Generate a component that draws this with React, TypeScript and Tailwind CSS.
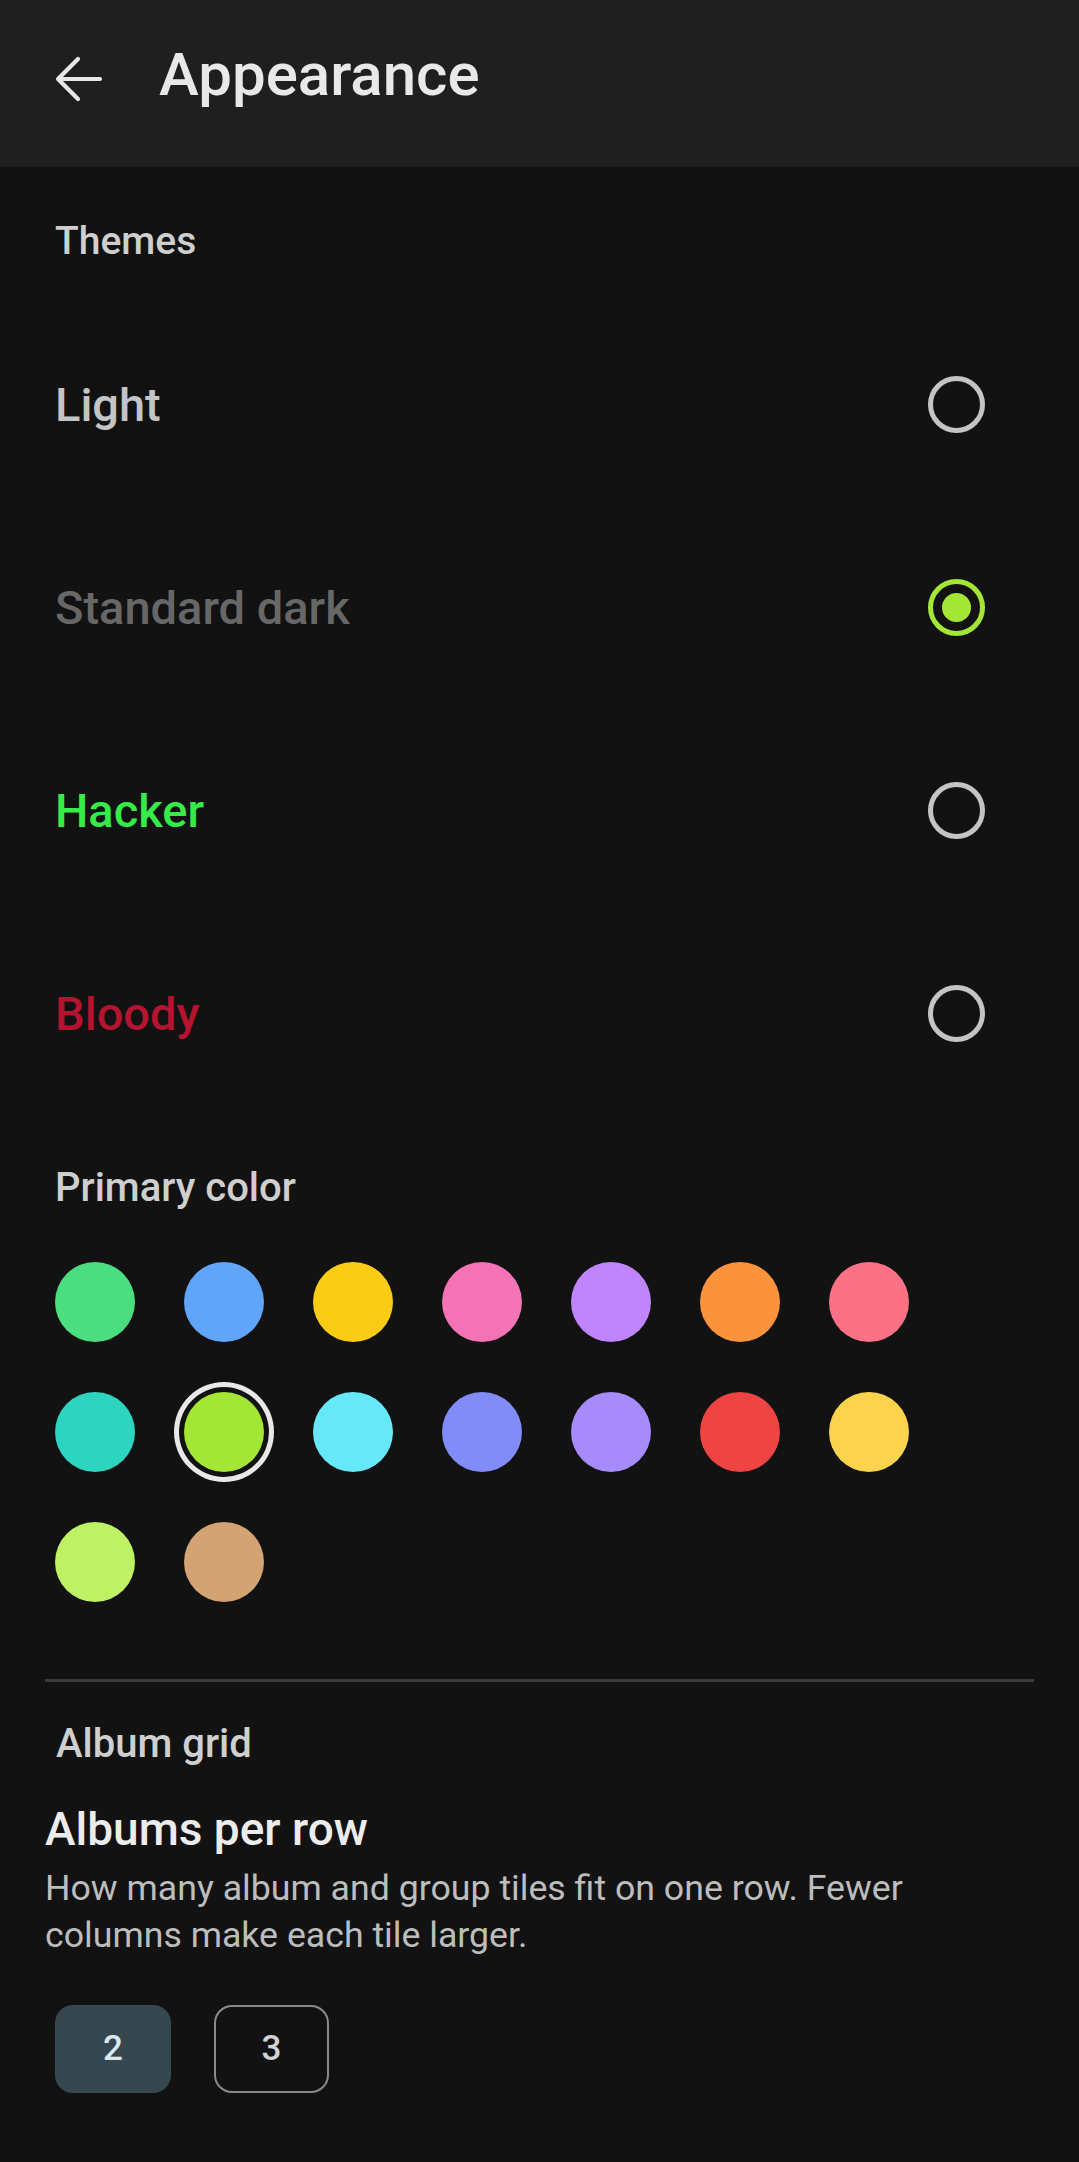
import { useState } from "react";

interface ThemeOption {
  id: string;
  label: string;
  textClass: string;
}

const themes: ThemeOption[] = [
  { id: "light", label: "Light", textClass: "text-[#c4c4c4]" },
  { id: "standard", label: "Standard dark", textClass: "text-[#676767]" },
  { id: "hacker", label: "Hacker", textClass: "text-[#36ea48]" },
  { id: "bloody", label: "Bloody", textClass: "text-[#b4142f]" },
];

const swatches = [
  { id: "green", className: "bg-[#4ade80]" },
  { id: "blue", className: "bg-[#60a5fa]" },
  { id: "yellow", className: "bg-[#facc15]" },
  { id: "pink", className: "bg-[#f472b6]" },
  { id: "purple", className: "bg-[#c084fc]" },
  { id: "orange", className: "bg-[#fb923c]" },
  { id: "rose", className: "bg-[#fb7185]" },
  { id: "teal", className: "bg-[#2dd4bf]" },
  { id: "lime", className: "bg-[#a3e635]" },
  { id: "cyan", className: "bg-[#67e8f9]" },
  { id: "indigo", className: "bg-[#818cf8]" },
  { id: "violet", className: "bg-[#a78bfa]" },
  { id: "red", className: "bg-[#ef4444]" },
  { id: "amber", className: "bg-[#fcd34d]" },
  { id: "lightlime", className: "bg-[#bef264]" },
  { id: "tan", className: "bg-[#d4a373]" },
];

const BackArrow = () => (
  <svg width="48" height="46" viewBox="0 0 48 46" fill="none" className="mt-[8px] shrink-0">
    <path
      d="M45 23H4M23 3 3 23l20 20"
      stroke="#e6e6e6"
      strokeWidth="4.2"
      strokeLinecap="round"
      strokeLinejoin="round"
    />
  </svg>
);

const Radio = ({ checked }: { checked: boolean }) =>
  checked ? (
    <span className="h-[57px] w-[57px] rounded-full border-[5px] border-[#a3e635] flex items-center justify-center">
      <span className="h-[29px] w-[29px] rounded-full bg-[#a3e635]" />
    </span>
  ) : (
    <span className="h-[57px] w-[57px] rounded-full border-[5px] border-[#c4c4c4]" />
  );

const App = () => {
  const [theme, setTheme] = useState("standard");
  const [color, setColor] = useState("lime");
  const [perRow, setPerRow] = useState(2);

  return (
    <div className="min-h-screen bg-[#121212] font-['Roboto','Liberation_Sans',sans-serif]">
      <header className="h-[167px] bg-[#1f1f1f] flex items-center gap-[56px] px-[55px] pb-[17px]">
        <BackArrow />
        <h1 className="text-[60px] leading-[70px] font-medium text-[#e8e8e8]">Appearance</h1>
      </header>

      <section className="px-[55px]">
        <h2 className="mt-[48px] text-[39px] leading-[52px] font-medium text-[#cfcfcf]">Themes</h2>
        <div className="mt-[36px]">
          {themes.map((t) => (
            <button
              key={t.id}
              onClick={() => setTheme(t.id)}
              className="h-[203px] w-full flex items-center justify-between pr-[39px]"
            >
              <span className={`text-[47px] leading-[56px] font-medium ${t.textClass}`}>{t.label}</span>
              <Radio checked={theme === t.id} />
            </button>
          ))}
        </div>

        <h2 className="mt-[47px] text-[40px] leading-[52px] font-medium text-[#cfcfcf]">Primary color</h2>
        <div className="mt-[48px] grid grid-cols-[repeat(7,80px)] gap-x-[49px] gap-y-[50px]">
          {swatches.map((s) => (
            <button
              key={s.id}
              onClick={() => setColor(s.id)}
              className={`h-[80px] w-[80px] rounded-full ${s.className} ${
                color === s.id ? "ring-[5px] ring-[#e8e8e8] ring-offset-[5px] ring-offset-[#121212]" : ""
              }`}
            />
          ))}
        </div>
      </section>

      <div className="mx-[45px] mt-[77px] h-[3px] bg-[#3a3a3a]" />

      <section className="px-[45px] pb-[60px]">
        <h2 className="ml-[11px] mt-[36px] text-[40px] leading-[52px] font-medium text-[#cfcfcf]">Album grid</h2>
        <h3 className="mt-[31px] text-[46px] leading-[56px] font-medium text-[#ececec]">Albums per row</h3>
        <p className="mt-[8px] max-w-[900px] text-[35.7px] leading-[47px] text-[#bdbdbd]">
          How many album and group tiles fit on one row. Fewer columns make each tile larger.
        </p>
        <div className="mt-[46px] ml-[10px] flex gap-[43px]">
          {[2, 3].map((n) =>
            perRow === n ? (
              <button
                key={n}
                onClick={() => setPerRow(n)}
                className="h-[88px] w-[116px] rounded-[18px] bg-[#37474f] text-[35px] font-medium text-[#dce8ef]"
              >
                {n}
              </button>
            ) : (
              <button
                key={n}
                onClick={() => setPerRow(n)}
                className="h-[88px] w-[115px] rounded-[18px] border-[2px] border-[#8a8a8a] text-[35px] font-medium text-[#d2d2d2]"
              >
                {n}
              </button>
            )
          )}
        </div>
      </section>
    </div>
  );
};

export default App;
